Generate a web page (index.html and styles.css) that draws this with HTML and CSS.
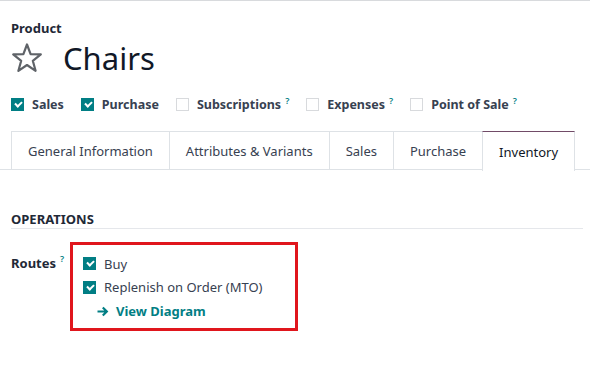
FILE: index.html
```html
<!DOCTYPE html>
<html>
<head>
<meta charset="utf-8">
<link rel="stylesheet" href="styles.css">
</head>
<body>
<div class="sheet">
  <div class="title-block">
    <div class="label-product">Product</div>
    <div class="name-row">
      <svg class="star" width="32" height="32" viewBox="0 0 32 32"><path d="M16 2.5 L19.6 12.2 L29.8 12.4 L21.8 18.8 L24.6 28.8 L16 23 L7.4 28.8 L10.2 18.8 L2.2 12.4 L12.4 12.2 Z" fill="none" stroke="#5f6368" stroke-width="2.2" stroke-linejoin="round"/></svg>
      <h1 class="name">Chairs</h1>
    </div>
  </div>
  <div class="options">
    <label class="opt"><span class="cb on"></span>Sales</label>
    <label class="opt"><span class="cb on"></span>Purchase</label>
    <label class="opt"><span class="cb"></span>Subscriptions<sup class="help">?</sup></label>
    <label class="opt"><span class="cb"></span>Expenses<sup class="help">?</sup></label>
    <label class="opt"><span class="cb"></span>Point of Sale<sup class="help">?</sup></label>
  </div>
  <ul class="tabs">
    <li class="tab">General Information</li>
    <li class="tab">Attributes &amp; Variants</li>
    <li class="tab">Sales</li>
    <li class="tab">Purchase</li>
    <li class="tab active">Inventory</li>
  </ul>
  <div class="group">
    <div class="group-title">OPERATIONS</div>
    <div class="field">
      <div class="field-label">Routes<sup class="help">?</sup></div>
      <div class="routes">
        <label class="route"><span class="cb on"></span>Buy</label>
        <label class="route"><span class="cb on"></span>Replenish on Order (MTO)</label>
        <a class="diagram"><svg class="arrow" width="12" height="11" viewBox="0 0 12 11"><path d="M0.5 5.5 H9.5 M5.8 1.5 L9.8 5.5 L5.8 9.5" fill="none" stroke="#017e84" stroke-width="2.2" stroke-linejoin="miter"/></svg>View Diagram</a>
      </div>
    </div>
  </div>
</div>
</body>
</html>
```
FILE: styles.css
```css
html, body {
  margin: 0;
  padding: 0;
  background: #fff;
}
body {
  border-top: 1px solid #d8dadd;
  font-family: "Noto Sans", "Open Sans", sans-serif;
  color: #374151;
  font-size: 13px;
}
.sheet {
  padding: 0 0 0 11px;
}
.title-block {
  padding-top: 18px;
}
.label-product {
  font-weight: 700;
  font-size: 13px;
  color: #1f2937;
  line-height: 18px;
}
.name-row {
  display: flex;
  align-items: center;
  gap: 20px;
  height: 40px;
  margin-top: 1px;
}
.star {
  display: block;
}
.name {
  margin: 0;
  font-weight: 400;
  font-size: 31px;
  color: #111827;
  line-height: 40px;
}
.options {
  display: flex;
  align-items: center;
  margin-top: 15px;
  height: 22px;
}
.opt {
  display: flex;
  align-items: center;
  font-weight: 700;
  font-size: 12.5px;
  color: #374151;
  margin-right: 17px;
}
.cb {
  display: inline-block;
  width: 13px;
  height: 13px;
  box-sizing: border-box;
  border: 1px solid #d8dadd;
  background: #fff;
  margin-right: 8px;
  position: relative;
  flex: none;
}
.cb.on {
  background: #017e84;
  border-color: #017e84;
}
.cb.on::after {
  content: "";
  position: absolute;
  left: 3px;
  top: 2px;
  width: 5px;
  height: 3px;
  border-left: 2px solid #fff;
  border-bottom: 2px solid #fff;
  transform: rotate(-45deg);
}
.help {
  color: #017e84;
  font-size: 9px;
  font-weight: 600;
  margin-left: 4px;
  position: relative;
  top: -4px;
  vertical-align: top;
}
.tabs {
  display: flex;
  list-style: none;
  margin: 16px 0 0 -11px;
  padding: 0 0 0 11px;
  border-bottom: 1px solid #dee2e6;
  height: 38px;
}
.tab {
  display: flex;
  align-items: center;
  padding: 0 16px;
  border: 1px solid #dee2e6;
  border-bottom: none;
  border-right: none;
  color: #374151;
  font-size: 13px;
  height: 39px;
  box-sizing: border-box;
}
.tab.active {
  border-top: 1px solid #714b67;
  border-right: 1px solid #dee2e6;
  background: #fff;
  color: #111827;
  height: 40px;
}
.group {
  margin-top: 40px;
  margin-right: 7px;
}
.group-title {
  font-weight: 700;
  font-size: 13px;
  color: #1f2937;
  line-height: 18px;
  padding-bottom: 0;
  border-bottom: 1px solid #e5e7eb;
}
.field {
  display: flex;
  align-items: flex-start;
  margin-top: 13px;
}
.field-label {
  width: 59px;
  font-weight: 700;
  color: #1f2937;
  padding-top: 12px;
  line-height: 18px;
}
.routes {
  border: 3px solid #e0161d;
  width: 212px;
  height: 76px;
  padding: 7px 0 0 10px;
  box-sizing: content-box;
  display: flex;
  flex-direction: column;
}
.route {
  display: flex;
  align-items: center;
  height: 23.5px;
  color: #374151;
  font-size: 13px;
}
.diagram {
  display: flex;
  align-items: center;
  height: 24px;
  padding-left: 14px;
  color: #017e84;
  font-weight: 700;
  font-size: 13px;
}
.arrow {
  margin-right: 7px;
  display: block;
}
```
